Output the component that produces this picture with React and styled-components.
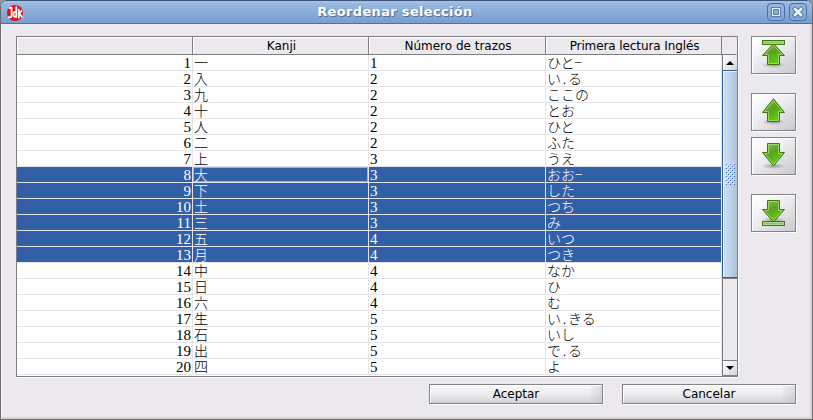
import React from 'react';
import styled, { createGlobalStyle, css } from 'styled-components';

const GlobalStyle = createGlobalStyle`
  * { box-sizing: border-box; }
  body { margin: 0; background: #9a9a9a; overflow: hidden; }
`;

const Dialog = styled.div`
  width: 813px;
  height: 420px;
  display: flex;
  flex-direction: column;
  border: 1px solid #6c6a6b;
  border-top: 0;
  border-radius: 6px 6px 0 0;
  overflow: hidden;
  background: #ebe9ed;
  font: 12px/16px "DejaVu Sans", sans-serif;
  color: #000;
`;

const TitleBar = styled.header`
  height: 24px;
  flex: none;
  margin: 0 -1px;
  padding: 0 5px 0 7px;
  display: grid;
  grid-template-columns: 42px 1fr 67px;
  align-items: center;
  border: 1px solid #41618d;
  border-top: 1px solid #3d5578;
  border-bottom-color: #4b71a5;
  border-radius: 6px 6px 0 0;
  background: linear-gradient(#a5c2e8 0, #97b7e2 15%, #86a9d6 60%, #799ecf 100%);
`;

const AppIcon = styled.svg`
  width: 16px;
  height: 16px;
  margin: 1px 0 0 -1px;
`;

const Title = styled.h1`
  margin: 0;
  text-align: center;
  color: #fff;
  font-size: 13px;
  line-height: 18px;
  letter-spacing: 0.33px;
  text-shadow: 1px 1px 1px #45689b;
`;

const WindowControls = styled.div`
  display: flex;
  justify-content: flex-end;
  gap: 4px;
`;

const ControlButton = styled.button`
  width: 18px;
  height: 18px;
  padding: 0;
  border: 1px solid #4a6d9e;
  border-radius: 4px;
  background: linear-gradient(#9bbae4, #7da1d1);
  box-shadow: inset 0 0 0 1px #8fafd9;
  svg { display: block; }
`;

const Body = styled.div`
  flex: 1;
  padding: 12px 14px 0 14px;
  border: 1px solid #fbf8f3;
  border-width: 0 2px 2px 1px;
  border-right-color: #d9d6d4;
  border-bottom-color: #d4d1d0;
`;

const Content = styled.div`
  display: flex;
  justify-content: space-between;
`;

const TableFrame = styled.div`
  width: 722px;
  height: 341px;
  display: grid;
  grid-template: 18px 321px / 705px 15px;
  border: 1px solid #807e80;
  box-shadow: 1px 1px 0 #fff;
  background: #ebe9ed;
`;

const columns = css`
  display: grid;
  grid-template-columns: 176px 176px 177px 176px;
`;

const HeaderRow = styled.div`
  ${columns}
`;

const HeaderCell = styled.div`
  height: 18px;
  padding-left: 2px;
  border-right: 1px solid #807e80;
  border-bottom: 1px solid #807e80;
  box-shadow: inset 1px 1px 0 #fff;
  text-align: center;
  line-height: 19px;
  white-space: nowrap;
  letter-spacing: ${p => p.$tracking || 'normal'};
`;

const Corner = styled.div`
  border-bottom: 1px solid #807e80;
  border-right: 1px solid #ebe9ed;
`;

const Rows = styled.div`
  background: #fff;
`;

const Row = styled.div`
  ${columns}
  height: 16px;
  color: ${p => (p.$selected ? '#fff' : '#000')};
  background: ${p => (p.$selected ? '#315fa8' : '#fff')};
`;

const Cell = styled.div`
  height: 16px;
  padding: 0 1px;
  border-right: 1px solid #e6e4e9;
  border-bottom: 1px solid #e6e4e9;
  white-space: nowrap;
  text-align: ${p => (p.$right ? 'right' : 'left')};
  font-family: ${p => (p.$jp ? '"Noto Sans CJK JP"' : '"Liberation Serif"')}, sans-serif;
  font-weight: ${p => (p.$jp ? 300 : 400)};
  font-size: ${p => (p.$jp ? '14px' : '15px')};
  line-height: ${p => (p.$jp ? '15px' : '16px')};
  ${p => p.$focus && css`box-shadow: inset 0 0 0 1px #e5a53a;`}
`;

const HalfWidth = styled.span`
  display: inline-block;
  width: 7px;
  text-align: center;
`;

const ScrollBar = styled.div`
  display: flex;
  flex-direction: column;
  height: 321px;
  border-left: 1px solid #807e80;
`;

const ScrollArrow = styled.div`
  height: 15px;
  flex: none;
  display: flex;
  align-items: center;
  justify-content: center;
  background: linear-gradient(135deg, #fff, #d6d5da);
  ${p => p.$down && css`
    height: 16px;
    border-top: 1px solid #807e80;
    border-bottom: 1px solid #807e80;
  `}
`;

const Thumb = styled.div`
  height: 208px;
  margin-left: -1px;
  border: 1px solid #315fa8;
  border-right: 0;
  box-shadow: inset 1px 1px 0 #e4effa;
  background: linear-gradient(90deg, #cfe0f0, #bfd2e7 55%, #abc2da);
  display: flex;
  align-items: center;
  justify-content: center;
`;

const Track = styled.div`
  flex: 1;
  border-top: 1px solid #807e80;
`;

const SideButtons = styled.div`
  display: grid;
  grid-template-rows: 57px 44px 57px 38px;
`;

const buttonFace = css`
  padding: 0;
  border: 1px solid #848284;
  border-radius: 0;
  color: #000;
`;

const MoveButton = styled.button`
  ${buttonFace}
  width: 45px;
  height: 38px;
  background: linear-gradient(145deg, #fff 5%, #ededf0 45%, #c9c8ce 100%);
  box-shadow: 1px 1px 0 #fff, inset 1px 1px 0 #fff;
  svg { display: block; margin: -1px; }
`;

const Footer = styled.footer`
  display: flex;
  justify-content: flex-end;
  gap: 19px;
  margin-top: 7px;
`;

const TextButton = styled.button`
  ${buttonFace}
  width: 174px;
  height: 20px;
  font: 12px/18px "DejaVu Sans", sans-serif;
  background:
    linear-gradient(90deg, transparent 92%, rgba(190, 188, 196, .5)),
    linear-gradient(#f8f8f9, #ebebee 55%, #d2d1d6);
  box-shadow: 1px 1px 0 #fff, inset 1px 1px 0 #fff;
`;

const data = [
  ['一', 1, 'ひと-'], ['入', 2, 'い.る'], ['九', 2, 'ここの'], ['十', 2, 'とお'],
  ['人', 2, 'ひと'], ['二', 2, 'ふた'], ['上', 3, 'うえ'], ['大', 3, 'おお-'],
  ['下', 3, 'した'], ['土', 3, 'つち'], ['三', 3, 'み'], ['五', 4, 'いつ'],
  ['月', 4, 'つき'], ['中', 4, 'なか'], ['日', 4, 'ひ'], ['六', 4, 'む'],
  ['生', 5, 'い.きる'], ['石', 5, 'いし'], ['出', 5, 'で.る'], ['四', 5, 'よ'],
];

const Reading = ({ text }) =>
  text.split(/([.-])/).map((part, i) =>
    part === '.' || part === '-' ? <HalfWidth key={i}>{part === '-' ? '−' : part}</HalfWidth> : part);

const shapes = {
  top: { arrow: 'M22.5 7.5 33.5 19.5H28.5V28.5H16.5V19.5H11.5Z', bar: 4.5, shade: 29 },
  up: { arrow: 'M22.5 5.8 33.5 19.5H28.5V28.5H16.5V19.5H11.5Z', shade: 29 },
  down: { arrow: 'M16.5 6.5H28.5V15.5H33.5L22.5 29 11.5 15.5H16.5Z', shade: 29 },
  bottom: { arrow: 'M16.5 6.5H28.5V15.5H33.5L22.5 28 11.5 15.5H16.5Z', bar: 27.5, shade: 26 },
};

const inner = {
  top: 'M22.5 9.2 31.2 18.5H27.5V27.5H17.5V18.5H13.8Z',
  up: 'M22.5 7.6 31.3 18.5H27.5V27.5H17.5V18.5H13.7Z',
  down: 'M17.5 7.5H27.5V16.5H31.3L22.5 27.3 13.7 16.5H17.5Z',
  bottom: 'M17.5 7.5H27.5V16.5H31.3L22.5 26.3 13.7 16.5H17.5Z',
};

const MoveIcon = ({ kind }) => {
  const s = shapes[kind];
  return (
    <svg width="45" height="38" viewBox="0 0 45 38">
      <defs>
        <linearGradient id={`g-${kind}`} x1="0" y1="0" x2=".5" y2="1">
          <stop offset="0" stopColor="#8fc75a" />
          <stop offset=".5" stopColor="#58a31c" />
          <stop offset="1" stopColor="#5fd00a" />
        </linearGradient>
        <radialGradient id={`s-${kind}`}>
          <stop offset="0" stopColor="#555" stopOpacity=".5" />
          <stop offset="1" stopColor="#555" stopOpacity="0" />
        </radialGradient>
      </defs>
      <ellipse cx="22.5" cy={s.shade} rx="12" ry="3" fill={`url(#s-${kind})`} />
      <path d={s.arrow} fill={`url(#g-${kind})`} stroke="#3d7a0b" />
      <path d={inner[kind]} fill="none" stroke="#a7d97e" strokeOpacity=".8" />
      {s.bar && (
        <>
          <rect x="11.5" y={s.bar} width="22" height="4" fill="#7fbd55" stroke="#3d7a0b" />
          <rect x="12.5" y={s.bar + 1} width="20" height="2" fill="#88c45d" stroke="#a9d98a" />
        </>
      )}
    </svg>
  );
};

const gripDots = [];
for (let y = 0; y < 22; y += 2) {
  for (let x = (y / 2) % 2 ? 2 : 0; x < 10; x += 4) gripDots.push([x, y]);
}

const Grip = () => (
  <svg width="11" height="22" shapeRendering="crispEdges">
    {gripDots.map(([x, y]) => (
      <g key={`${x}-${y}`}>
        <rect x={x} y={y} width="1" height="1" fill="#fff" />
        <rect x={x + 1} y={y + 1} width="1" height="1" fill="#3a68ae" />
      </g>
    ))}
  </svg>
);

export default function App() {
  return (
    <>
      <GlobalStyle />
      <Dialog>
        <TitleBar>
          <AppIcon viewBox="0 0 16 16">
            <circle cx="8" cy="8" r="8" fill="#e3101b" />
            <g fill="none" stroke="#fff" strokeLinecap="round" strokeLinejoin="round" strokeWidth="1.8">
              <path d="M2.7 3 4.6 2.6V11Q4.2 12.8 1.8 12.2" />
              <path d="M9.3 2.2V12M9.2 7.3C7 6.2 6.2 8 6.5 10.2c.3 2 2 2.2 2.8.4" />
              <path d="M11.8 4.6V12.6M14.5 6 12.2 8.7l2.6 3" />
            </g>
          </AppIcon>
          <Title>Reordenar selección</Title>
          <WindowControls>
            <ControlButton aria-label="Maximizar">
              <svg width="16" height="16" shapeRendering="crispEdges" fill="none">
                <rect x="3.5" y="3.5" width="9" height="9" stroke="#587cae" />
                <rect x="4.5" y="4.5" width="7" height="7" stroke="#edf4fd" />
                <rect x="5.5" y="5.5" width="5" height="5" stroke="#587cae" />
              </svg>
            </ControlButton>
            <ControlButton aria-label="Cerrar">
              <svg width="16" height="16" fill="none">
                <path d="M5 5 11 11M11 5 5 11" stroke="#587cae" strokeWidth="4.6" strokeLinecap="square" />
                <path d="M5 5 11 11M11 5 5 11" stroke="#edf4fd" strokeWidth="2.6" strokeLinecap="square" />
              </svg>
            </ControlButton>
          </WindowControls>
        </TitleBar>
        <Body>
          <Content>
            <TableFrame>
              <HeaderRow>
                <HeaderCell />
                <HeaderCell>Kanji</HeaderCell>
                <HeaderCell>Número de trazos</HeaderCell>
                <HeaderCell $tracking="-0.1px">Primera lectura Inglés</HeaderCell>
              </HeaderRow>
              <Corner />
              <Rows>
                {data.map(([kanji, strokes, reading], i) => {
                  const selected = i >= 7 && i <= 12;
                  return (
                    <Row key={kanji} $selected={selected}>
                      <Cell $right>{i + 1}</Cell>
                      <Cell $jp $focus={i === 7}>{kanji}</Cell>
                      <Cell>{strokes}</Cell>
                      <Cell $jp><Reading text={reading} /></Cell>
                    </Row>
                  );
                })}
              </Rows>
              <ScrollBar>
                <ScrollArrow>
                  <svg width="8" height="4"><path d="M0 4 4 0 8 4Z" fill="#000" /></svg>
                </ScrollArrow>
                <Thumb><Grip /></Thumb>
                <Track />
                <ScrollArrow $down>
                  <svg width="8" height="4"><path d="M0 0 4 4 8 0Z" fill="#000" /></svg>
                </ScrollArrow>
              </ScrollBar>
            </TableFrame>
            <SideButtons>
              {['top', 'up', 'down', 'bottom'].map(kind => (
                <MoveButton key={kind} aria-label={kind}><MoveIcon kind={kind} /></MoveButton>
              ))}
            </SideButtons>
          </Content>
          <Footer>
            <TextButton>Aceptar</TextButton>
            <TextButton>Cancelar</TextButton>
          </Footer>
        </Body>
      </Dialog>
    </>
  );
}
